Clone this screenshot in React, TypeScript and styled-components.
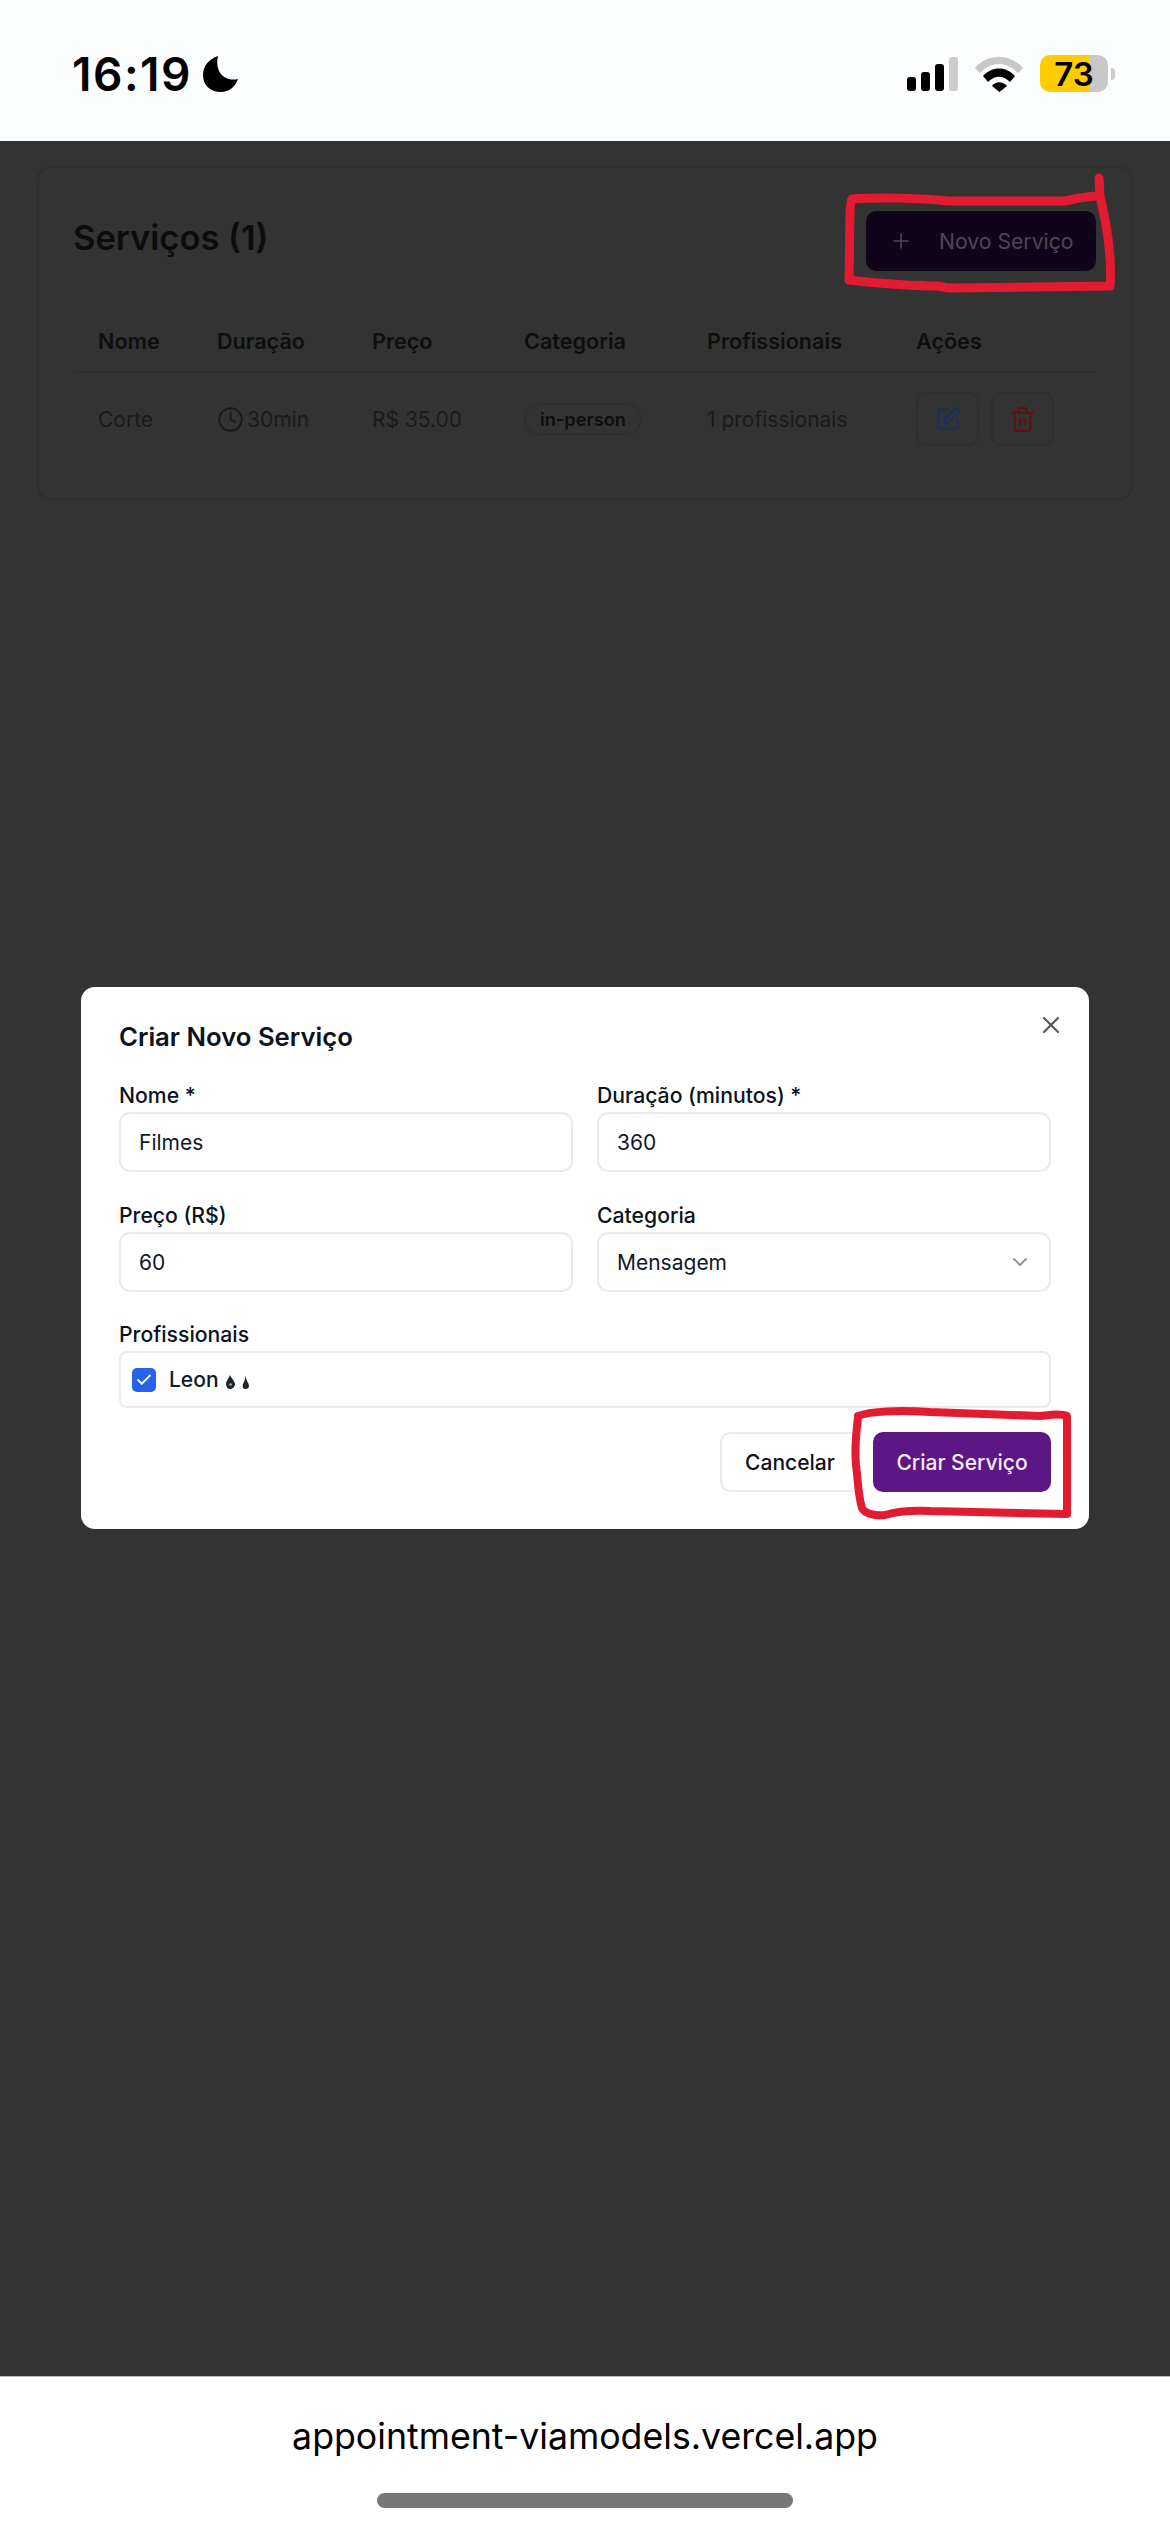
import React from 'react';
import styled, { createGlobalStyle } from 'styled-components';
import { Check, ChevronDown, Clock, Plus, SquarePen, Trash2, X } from 'lucide-react';

const GlobalStyle = createGlobalStyle`
  html, body {
    margin: 0;
    padding: 0;
    background: #333333;
  }
  * {
    box-sizing: border-box;
  }
`;

const Screen = styled.div`
  position: relative;
  width: 1170px;
  height: 2532px;
  display: flex;
  flex-direction: column;
  overflow: hidden;
  font-family: Inter, "Liberation Sans", sans-serif;
`;

const StatusBar = styled.div`
  height: 141px;
  flex: none;
  display: flex;
  align-items: center;
  justify-content: space-between;
  padding: 6px 55px 0 72px;
  background: #fcfdff;
`;

const StatusGroup = styled.div`
  display: flex;
  align-items: center;
  gap: ${(p: { $gap: number }) => p.$gap}px;
`;

const Clockface = styled.span`
  font-size: 46px;
  font-weight: 600;
  letter-spacing: 1.5px;
  color: #000;
`;

const Battery = styled.div`
  width: 68px;
  height: 37px;
  border-radius: 10px;
  overflow: hidden;
  display: flex;
  align-items: center;
  justify-content: center;
  background: linear-gradient(to right, #ffcc00 0, #ffcc00 50px, #c8c8c8 50px);
  font-size: 33px;
  font-weight: 600;
  color: #000;
`;

const BatteryNub = styled.div`
  width: 4px;
  height: 12px;
  margin-left: 3px;
  border-radius: 0 6px 6px 0;
  background: #cccccc;
`;

const Backdrop = styled.div`
  flex: 1;
  display: flex;
  flex-direction: column;
  padding: 25px 37px 0;
  background: #333333;
`;

const Card = styled.div`
  height: 334px;
  padding: 36px 35px 0;
  border: 2px solid #2f2f2f;
  border-radius: 14px;
`;

const CardHeader = styled.div`
  display: flex;
  align-items: center;
  justify-content: space-between;
  height: 60px;
  padding-top: 6px;
`;

const CardTitle = styled.h2`
  margin: 0 0 0 -1px;
  font-size: 34.5px;
  font-weight: 600;
  color: #0c0c0c;
`;

const NewButton = styled.div`
  width: 230px;
  height: 60px;
  margin-top: 8px;
  display: flex;
  align-items: center;
  gap: 26px;
  padding-left: 23px;
  border-radius: 10px;
  background: #10041a;
  color: #4c4753;
  font-size: 21.2px;
`;

const Table = styled.div`
  margin-top: 41px;
`;

const TableRow = styled.div`
  display: grid;
  grid-template-columns: 119px 155px 152px 183px 209px 1fr;
  padding-left: 24px;
  align-items: center;
  height: ${(p: { $height: number }) => p.$height}px;
`;

const HeaderRow = styled(TableRow)`
  border-bottom: 2px solid #2f2f2f;
  padding-top: 5px;
  font-size: 21.6px;
  font-weight: 600;
  color: #0e0e0e;
`;

const BodyCell = styled.div`
  display: flex;
  align-items: center;
  gap: 3px;
  font-size: 21px;
  color: #1a1a1a;
`;

const Badge = styled.span`
  display: inline-flex;
  align-items: center;
  height: 32px;
  padding: 0 14px;
  border: 2px solid #2f2f2f;
  border-radius: 16px;
  font-size: 18.2px;
  font-weight: 600;
  color: #0e0e0e;
`;

const ActionGroup = styled.div`
  display: flex;
  gap: 12px;
`;

const ActionButton = styled.div`
  width: 63px;
  height: 54px;
  display: flex;
  align-items: center;
  justify-content: center;
  border: 2px solid #2f2f2f;
  border-radius: 10px;
  color: ${(p: { $tone: string }) => p.$tone};
`;

const ModalLayer = styled.div`
  flex: 1;
  display: flex;
  align-items: flex-start;
  justify-content: center;
  padding-top: 487px;
`;

const Modal = styled.div`
  position: relative;
  width: 1008px;
  height: 542px;
  padding: 33px 38px 0;
  border-radius: 14px;
  background: #ffffff;
`;

const CloseButton = styled.div`
  position: absolute;
  top: 24px;
  right: 24px;
  color: #555c66;
  display: flex;
`;

const ModalTitle = styled.h3`
  margin: 0 0 26px;
  height: 36px;
  line-height: 34px;
  font-size: 25.7px;
  font-weight: 600;
  color: #0b1220;
`;

const FormGrid = styled.div`
  display: grid;
  grid-template-columns: 454px 454px;
  column-gap: 24px;
  row-gap: 30px;
`;

const Field = styled.div`
  display: flex;
  flex-direction: column;
`;

const Label = styled.div`
  height: 30px;
  line-height: 26px;
  font-size: 21.2px;
  font-weight: 450;
  color: #0b1220;
`;

const Input = styled.div`
  height: 60px;
  display: flex;
  align-items: center;
  justify-content: space-between;
  padding: 0 18px;
  border: 2px solid #e8eaee;
  border-radius: 11px;
  font-size: 21px;
  color: #111827;
`;

const Caret = styled.span`
  display: flex;
  margin-right: -1px;
  color: #8a9099;
`;

const ProfessionalsField = styled(Field)`
  margin-top: 29px;
`;

const ProfessionalBox = styled.div`
  height: 57px;
  display: flex;
  align-items: center;
  gap: 13px;
  padding-left: 11px;
  border: 2px solid #e8eaee;
  border-radius: 8px;
  font-size: 21px;
  font-weight: 450;
  color: #111827;
`;

const Checkbox = styled.div`
  width: 24px;
  height: 24px;
  display: flex;
  align-items: center;
  justify-content: center;
  border-radius: 5px;
  background: #2563eb;
  color: #ffffff;
`;

const ProfessionalName = styled.span`
  display: flex;
  align-items: center;
  gap: 7px;
`;

const FlameIcons = styled.svg`
  margin-top: 5px;
  filter: blur(0.5px);
`;

const Footer = styled.div`
  display: flex;
  justify-content: flex-end;
  gap: 13px;
  margin-top: 24px;
`;

const FooterButton = styled.div<{ $primary?: boolean }>`
  width: ${(p) => (p.$primary ? 178 : 140)}px;
  height: 60px;
  display: flex;
  align-items: center;
  justify-content: center;
  border-radius: 10px;
  border: 2px solid ${(p) => (p.$primary ? '#5c1784' : '#e8eaee')};
  background: ${(p) => (p.$primary ? '#5c1784' : '#ffffff')};
  color: ${(p) => (p.$primary ? '#f3ecf7' : '#0b1220')};
  font-size: 21px;
  font-weight: 450;
`;

const BottomBar = styled.div`
  height: 156px;
  flex: none;
  display: flex;
  flex-direction: column;
  align-items: center;
  padding-top: 37px;
  background: #ffffff;
  border-top: 1px solid #bbbbbb;
`;

const Url = styled.div`
  font-size: 35.7px;
  line-height: 44px;
  color: #000;
`;

const HomeIndicator = styled.div`
  width: 416px;
  height: 15px;
  margin-top: 35px;
  border-radius: 8px;
  background: #777777;
`;

const Scribble = styled.svg`
  position: absolute;
  left: 0;
  top: 0;
  pointer-events: none;
`;

const Moon = () => (
  <svg width="36" height="36" viewBox="0 0 36 36">
    <path d="M15 0C6 3 0 10 0 19c0 10 7 17 18 17 8 0 14-5 17-13-11 3-24-5-20-23z" fill="#000" />
  </svg>
);

const Signal = () => (
  <svg width="51" height="36" viewBox="0 0 51 36">
    <rect x="0" y="21" width="9" height="14" rx="3" fill="#000" />
    <rect x="14" y="16" width="9" height="19" rx="3" fill="#000" />
    <rect x="28" y="8" width="9" height="27" rx="3" fill="#000" />
    <rect x="42" y="1" width="9" height="34" rx="3" fill="#cccccc" />
  </svg>
);

const Wifi = () => (
  <svg width="48" height="36" viewBox="0 0 48 36">
    <path d="M0 12C13-3 35-3 48 12l-5 5C31 5 17 5 5 17z" fill="#c8c8c8" />
    <path d="M8 20c9-10 23-10 32 0l-5 6c-7-7-15-7-22 0z" fill="#000" />
    <path d="M17 30c4-5 10-5 15 0l-7.500 6z" fill="#000" />
  </svg>
);

const Flames = () => (
  <FlameIcons width="23" height="14" viewBox="0 0 23 14">
    <path d="M4 0C3 3 0 6 0 9c0 3 2 5 4 5s5-2 5-5c0-3-4-6-5-9z" fill="#1f242b" />
    <circle cx="4.500" cy="9.500" r="1.300" fill="#aab0b8" />
    <path d="M19.500 0c0 4-1.500 7-2.500 9-1 3 .5 5 2.500 5s3.500-1 3.500-3c0-3-3-5-3.500-11z" fill="#1f242b" />
  </FlameIcons>
);

export default function App() {
  return (
    <Screen>
      <GlobalStyle />
      <StatusBar>
        <StatusGroup $gap={11}>
          <Clockface>16:19</Clockface>
          <Moon />
        </StatusGroup>
        <StatusGroup $gap={17}>
          <Signal />
          <Wifi />
          <StatusGroup $gap={0}>
            <Battery>73</Battery>
            <BatteryNub />
          </StatusGroup>
        </StatusGroup>
      </StatusBar>
      <Backdrop>
        <Card>
          <CardHeader>
            <CardTitle>Serviços (1)</CardTitle>
            <NewButton>
              <Plus size={24} strokeWidth={1.6} />
              Novo Serviço
            </NewButton>
          </CardHeader>
          <Table>
            <HeaderRow $height={68}>
              <div>Nome</div>
              <div>Duração</div>
              <div>Preço</div>
              <div>Categoria</div>
              <div>Profissionais</div>
              <div>Ações</div>
            </HeaderRow>
            <TableRow $height={92}>
              <BodyCell>Corte</BodyCell>
              <BodyCell>
                <Clock size={27} strokeWidth={1.7} />
                30min
              </BodyCell>
              <BodyCell>R$ 35.00</BodyCell>
              <BodyCell>
                <Badge>in-person</Badge>
              </BodyCell>
              <BodyCell>1 profissionais</BodyCell>
              <ActionGroup>
                <ActionButton $tone="#17305f">
                  <SquarePen size={26} strokeWidth={1.7} />
                </ActionButton>
                <ActionButton $tone="#5f0e11">
                  <Trash2 size={27} strokeWidth={1.7} />
                </ActionButton>
              </ActionGroup>
            </TableRow>
          </Table>
        </Card>
        <ModalLayer>
          <Modal>
            <CloseButton>
              <X size={28} strokeWidth={1.9} />
            </CloseButton>
            <ModalTitle>Criar Novo Serviço</ModalTitle>
            <FormGrid>
              <Field>
                <Label>Nome *</Label>
                <Input>Filmes</Input>
              </Field>
              <Field>
                <Label>Duração (minutos) *</Label>
                <Input>360</Input>
              </Field>
              <Field>
                <Label>Preço (R$)</Label>
                <Input>60</Input>
              </Field>
              <Field>
                <Label>Categoria</Label>
                <Input>
                  Mensagem
                  <Caret>
                    <ChevronDown size={24} strokeWidth={1.8} />
                  </Caret>
                </Input>
              </Field>
            </FormGrid>
            <ProfessionalsField>
              <Label>Profissionais</Label>
              <ProfessionalBox>
                <Checkbox>
                  <Check size={18} strokeWidth={2.4} />
                </Checkbox>
                <ProfessionalName>
                  Leon
                  <Flames />
                </ProfessionalName>
              </ProfessionalBox>
            </ProfessionalsField>
            <Footer>
              <FooterButton>Cancelar</FooterButton>
              <FooterButton $primary>Criar Serviço</FooterButton>
            </Footer>
          </Modal>
        </ModalLayer>
      </Backdrop>
      <BottomBar>
        <Url>appointment-viamodels.vercel.app</Url>
        <HomeIndicator />
      </BottomBar>
      <Scribble width="1170" height="2532" viewBox="0 0 1170 2532" fill="none">
        <path
          d="M1099 178 L1100 196 C1085 196 1075 199 1065 201 L948 201 C920 198 880 197 852 199 C849 202 850 240 849 280 C880 284 920 286 938 286 L948 288 L1110 286 C1112 260 1108 230 1100 196"
          stroke="#e31b31"
          strokeWidth="9"
          strokeLinecap="round"
          strokeLinejoin="round"
        />
        <path
          d="M858 1416 C870 1411 900 1410 930 1412 L1040 1416 C1050 1415 1060 1413 1067 1416 L1067 1514 L930 1511 C910 1510 895 1512 885 1515 C875 1516 865 1514 862 1508 C858 1495 858 1480 856 1465 C854 1445 857 1430 858 1416"
          stroke="#e31b31"
          strokeWidth="8"
          strokeLinecap="round"
          strokeLinejoin="round"
        />
      </Scribble>
    </Screen>
  );
}
